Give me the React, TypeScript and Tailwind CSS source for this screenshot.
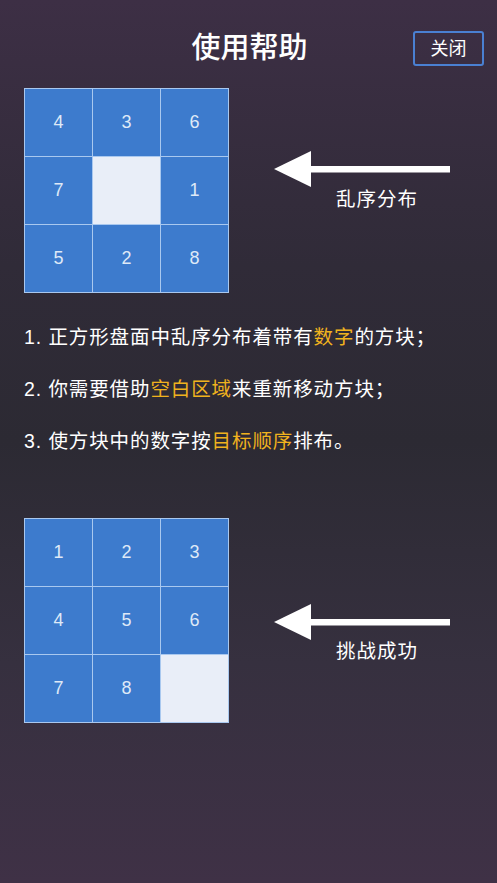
import React from "react";

const font = { fontFamily: '"Liberation Sans", "Noto Sans CJK SC", sans-serif' };

function Board({ cells }: { cells: (number | null)[] }) {
  return (
    <div className="grid grid-cols-[67px_67px_67px] grid-rows-[67px_67px_67px] gap-px p-px bg-[#a9c8ef] w-[205px] h-[205px] shrink-0">
      {cells.map((c, i) =>
        c === null ? (
          <div key={i} className="bg-[#e9eef8]" />
        ) : (
          <div key={i} className="bg-[#3d7bcd] flex items-center justify-center text-[18px] text-[#dfe9f7]">
            {c}
          </div>
        )
      )}
    </div>
  );
}

function Arrow() {
  return (
    <svg width="180" height="38" viewBox="0 0 180 38" className="block">
      <polygon points="2,19 39,1 39,37" fill="#ffffff" />
      <rect x="38" y="16" width="140" height="6.5" fill="#ffffff" />
    </svg>
  );
}

export default function App() {
  const Y = ({ children }: { children: React.ReactNode }) => (
    <span className="text-[#f0b21e]">{children}</span>
  );
  return (
    <div
      className="w-[497px] h-[883px] overflow-hidden text-white bg-[linear-gradient(180deg,#3d2f45_0%,#302b38_30%,#2c2a33_50%,#36303f_75%,#3f3146_100%)]"
      style={font}
    >
      <div className="grid grid-cols-[1fr_auto_1fr] items-center pt-[31px] h-[35px] box-content">
        <div />
        <div className="text-[29px] font-medium leading-none pl-[2px]">使用帮助</div>
        <div className="flex justify-end pr-[13px]">
          <div className="w-[71px] h-[35px] border-2 border-[#4a80d2] rounded-[3px] flex items-center justify-center text-[18px] leading-none">
            关闭
          </div>
        </div>
      </div>

      <div className="flex pl-[24px] pt-[22px]">
        <Board cells={[4, 3, 6, 7, null, 1, 5, 2, 8]} />
        <div className="ml-[43px] pt-[62px] flex flex-col">
          <Arrow />
          <div className="ml-[64px] mt-[2px] text-[19.5px] leading-none tracking-[1px]">乱序分布</div>
        </div>
      </div>

      <div className="pl-[24px] mt-[18px] text-[19.5px] leading-[52px] tracking-[0.9px]">
        <div>1. 正方形盘面中乱序分布着带有<Y>数字</Y>的方块；</div>
        <div>2. 你需要借助<Y>空白区域</Y>来重新移动方块；</div>
        <div>3. 使方块中的数字按<Y>目标顺序</Y>排布。</div>
      </div>

      <div className="flex pl-[24px] mt-[51px]">
        <Board cells={[1, 2, 3, 4, 5, 6, 7, 8, null]} />
        <div className="ml-[43px] pt-[85px] flex flex-col">
          <Arrow />
          <div className="ml-[64px] mt-[1px] text-[19.5px] leading-none tracking-[1px]">挑战成功</div>
        </div>
      </div>
    </div>
  );
}
